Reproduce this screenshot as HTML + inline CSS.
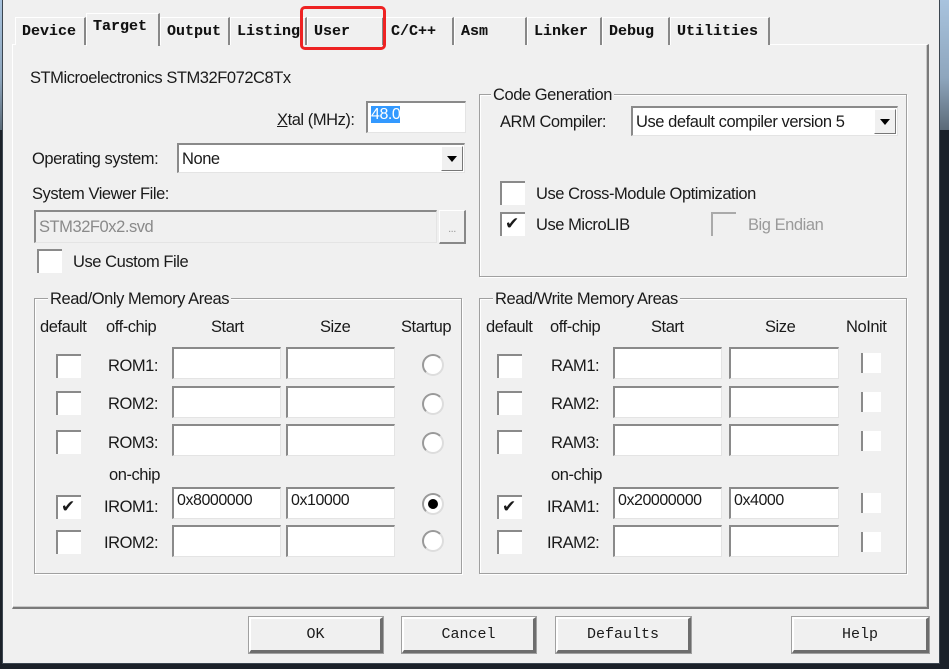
<!DOCTYPE html>
<html><head><meta charset="utf-8"><style>
*{margin:0;padding:0;box-sizing:border-box}
body{width:949px;height:669px;overflow:hidden;position:relative;background:#1b2129;font-family:"Liberation Sans",sans-serif;font-size:16.5px;color:#1a1a1a;letter-spacing:-0.45px}
.a{position:absolute}
#topbg{left:0;top:0;width:949px;height:130px;background:linear-gradient(#a8c3de,#8ea6bd 60%,#5b6a78)}
#win{left:2px;top:0;width:938px;height:664px;background:#f0f0f0;border:1px solid #3c4650;border-top:none}
.tab{position:absolute;top:17px;height:28px;border:1px solid #fff;border-right:2px solid #888;border-bottom:none;font-family:"Liberation Mono",monospace;font-size:15px;letter-spacing:0;padding:5px 0 0 6px;color:#111;background:#f0f0f0;font-weight:bold;-webkit-text-stroke:0.1px}
.tab.sel{top:13px;height:33px;z-index:2;padding-top:4px}
#panel{left:12px;top:44px;width:917px;height:565px;border-top:1px solid #fff;border-left:1px solid #fff;border-right:2px solid #7a7a7a;border-bottom:2px solid #7a7a7a;box-shadow:inset -1px -1px 0 #c8c8c8}
.t{position:absolute;white-space:nowrap;line-height:1;margin-top:2px}
.in{position:absolute;background:#fff;border-top:2px solid #8a8a8a;border-left:2px solid #8a8a8a;border-right:1px solid #e4e4e4;border-bottom:1px solid #e4e4e4;font-size:16px;padding:3px 3px;white-space:nowrap}
.cb{position:absolute;width:25px;height:24px;background:#fff;border-top:2px solid #8a8a8a;border-left:2px solid #8a8a8a;font-size:17px;line-height:20px;padding-left:3px}
.grp{position:absolute;border:1px solid #a0a0a0;box-shadow:1px 1px 0 #fff, inset 1px 1px 0 #fff}
.lg{position:absolute;background:#f0f0f0;padding:0 2px;white-space:nowrap;line-height:1;margin-top:2px}
.rd{position:absolute;width:22px;height:22px;border-radius:50%;background:#fff;border:2px solid #999;border-right-color:#ddd;border-bottom-color:#ddd}
.btn{position:absolute;height:36px;border-top:2px solid #fff;border-left:2px solid #fff;border-right:3px solid #6d6d6d;border-bottom:3px solid #6d6d6d;outline:1px solid #a0a0a0;font-family:"Liberation Mono",monospace;font-size:15px;text-align:center;line-height:31px;letter-spacing:0}
.dd{position:absolute;right:1px;top:1px;width:22px;bottom:1px;background:#f0f0f0;border:1px solid #fff;border-right-color:#777;border-bottom-color:#777}
.dd:after{content:"";position:absolute;left:5px;top:9px;border-left:5px solid transparent;border-right:5px solid transparent;border-top:6px solid #000}
.ni{position:absolute;width:20px;height:20px;background:#fff;border-left:2px solid #8a8a8a}
</style></head><body>
<div class="a" id="topbg"></div>
<div class="a" id="win"></div>
<div class="a" id="panel"></div>
<div class="tab" style="left:15px;width:71px">Device</div>
<div class="tab sel" style="left:86px;width:74px">Target</div>
<div class="tab" style="left:160px;width:70px">Output</div>
<div class="tab" style="left:230px;width:77px">Listing</div>
<div class="tab" style="left:307px;width:77px">User</div>
<div class="tab" style="left:384px;width:70px">C/C++</div>
<div class="tab" style="left:454px;width:73px">Asm</div>
<div class="tab" style="left:527px;width:75px">Linker</div>
<div class="tab" style="left:602px;width:68px">Debug</div>
<div class="tab" style="left:670px;width:100px">Utilities</div>
<div class="a" style="left:300px;top:6px;width:86px;height:44px;border:3px solid #ee2222;border-radius:5px;z-index:5"></div>

<div class="t" style="left:30px;top:68px">STMicroelectronics STM32F072C8Tx</div>
<div class="t" style="left:277px;top:110px"><u>X</u>tal (MHz):</div>
<div class="in" style="left:366px;top:101px;width:100px;height:32px"><span style="background:#3399ff;color:#fff">48.0</span></div>
<div class="t" style="left:32px;top:149px">Operating system:</div>
<div class="in" style="left:177px;top:143px;width:288px;height:30px;font-size:16.5px;padding-top:5px">None<div class="dd"></div></div>
<div class="t" style="left:32px;top:184px">System Viewer File:</div>
<div class="in" style="left:34px;top:210px;width:403px;height:33px;background:#f0f0f0;color:#8a8a8a;font-size:16.5px;padding-top:6px">STM32F0x2.svd</div>
<div class="a" style="left:439px;top:210px;width:27px;height:34px;border:1px solid #fff;border-right:2px solid #888;border-bottom:2px solid #888;color:#999;font-size:11px;text-align:center;line-height:36px">...</div>
<div class="cb" style="left:37px;top:249px"></div>
<div class="t" style="left:73px;top:252px">Use Custom File</div>

<div class="grp" style="left:479px;top:94px;width:428px;height:183px"></div>
<div class="lg" style="left:491px;top:85px">Code Generation</div>
<div class="t" style="left:500px;top:112px">ARM Compiler:</div>
<div class="in" style="left:631px;top:106px;width:267px;height:30px;font-size:16.5px;padding-top:5px">Use default compiler version 5<div class="dd"></div></div>
<div class="cb" style="left:500px;top:181px"></div>
<div class="t" style="left:536px;top:184px">Use Cross-Module Optimization</div>
<div class="cb" style="left:500px;top:212px">✔</div>
<div class="t" style="left:536px;top:215px">Use MicroLIB</div>
<div class="cb" style="left:711px;top:212px;background:#f0f0f0;border-color:#aaa"></div>
<div class="t" style="left:748px;top:215px;color:#9a9a9a">Big Endian</div>

<div class="grp" style="left:34px;top:298px;width:428px;height:276px"></div>
<div class="lg" style="left:48px;top:289px">Read/Only Memory Areas</div>
<div class="t" style="left:40px;top:317px">default</div>
<div class="t" style="left:106px;top:317px">off-chip</div>
<div class="t" style="left:211px;top:317px">Start</div>
<div class="t" style="left:320px;top:317px">Size</div>
<div class="t" style="left:401px;top:317px">Startup</div>

<div class="grp" style="left:479px;top:298px;width:428px;height:276px"></div>
<div class="lg" style="left:493px;top:289px">Read/Write Memory Areas</div>
<div class="t" style="left:486px;top:317px">default</div>
<div class="t" style="left:550px;top:317px">off-chip</div>
<div class="t" style="left:651px;top:317px">Start</div>
<div class="t" style="left:765px;top:317px">Size</div>
<div class="t" style="left:846px;top:317px">NoInit</div>

<div class="cb" style="left:56px;top:354px"></div><div class="t" style="left:108px;top:356px">ROM1:</div>
<div class="in" style="left:172px;top:347px;width:109px;height:32px"></div><div class="in" style="left:286px;top:347px;width:109px;height:32px"></div>
<div class="rd" style="left:422px;top:354px"></div>
<div class="cb" style="left:56px;top:391px"></div><div class="t" style="left:108px;top:394px">ROM2:</div>
<div class="in" style="left:172px;top:386px;width:109px;height:32px"></div><div class="in" style="left:286px;top:386px;width:109px;height:32px"></div>
<div class="rd" style="left:422px;top:393px"></div>
<div class="cb" style="left:56px;top:430px"></div><div class="t" style="left:108px;top:433px">ROM3:</div>
<div class="in" style="left:172px;top:424px;width:109px;height:32px"></div><div class="in" style="left:286px;top:424px;width:109px;height:32px"></div>
<div class="rd" style="left:422px;top:432px"></div>
<div class="t" style="left:109px;top:465px">on-chip</div>
<div class="cb" style="left:56px;top:495px">✔</div><div class="t" style="left:104px;top:497px">IROM1:</div>
<div class="in" style="left:172px;top:487px;width:109px;height:32px">0x8000000</div><div class="in" style="left:286px;top:487px;width:109px;height:32px">0x10000</div>
<div class="rd" style="left:422px;top:493px"><div class="a" style="left:4px;top:4px;width:10px;height:10px;border-radius:50%;background:#000"></div></div>
<div class="cb" style="left:56px;top:530px"></div><div class="t" style="left:104px;top:533px">IROM2:</div>
<div class="in" style="left:172px;top:525px;width:109px;height:32px"></div><div class="in" style="left:286px;top:525px;width:109px;height:32px"></div>
<div class="rd" style="left:422px;top:530px"></div>

<div class="cb" style="left:497px;top:354px"></div><div class="t" style="left:551px;top:356px">RAM1:</div>
<div class="in" style="left:613px;top:347px;width:109px;height:32px"></div><div class="in" style="left:729px;top:347px;width:110px;height:32px"></div>
<div class="ni" style="left:861px;top:353px"></div>
<div class="cb" style="left:497px;top:391px"></div><div class="t" style="left:551px;top:394px">RAM2:</div>
<div class="in" style="left:613px;top:386px;width:109px;height:32px"></div><div class="in" style="left:729px;top:386px;width:110px;height:32px"></div>
<div class="ni" style="left:861px;top:392px"></div>
<div class="cb" style="left:497px;top:430px"></div><div class="t" style="left:551px;top:433px">RAM3:</div>
<div class="in" style="left:613px;top:424px;width:109px;height:32px"></div><div class="in" style="left:729px;top:424px;width:110px;height:32px"></div>
<div class="ni" style="left:861px;top:431px"></div>
<div class="t" style="left:551px;top:465px">on-chip</div>
<div class="cb" style="left:497px;top:495px">✔</div><div class="t" style="left:547px;top:497px">IRAM1:</div>
<div class="in" style="left:613px;top:487px;width:109px;height:32px">0x20000000</div><div class="in" style="left:729px;top:487px;width:110px;height:32px">0x4000</div>
<div class="ni" style="left:861px;top:493px"></div>
<div class="cb" style="left:497px;top:530px"></div><div class="t" style="left:547px;top:533px">IRAM2:</div>
<div class="in" style="left:613px;top:525px;width:109px;height:32px"></div><div class="in" style="left:729px;top:525px;width:110px;height:32px"></div>
<div class="ni" style="left:861px;top:532px"></div>

<div class="btn" style="left:249px;top:617px;width:134px">OK</div>
<div class="btn" style="left:402px;top:617px;width:134px">Cancel</div>
<div class="btn" style="left:556px;top:617px;width:135px">Defaults</div>
<div class="btn" style="left:792px;top:617px;width:137px">Help</div>
</body></html>
